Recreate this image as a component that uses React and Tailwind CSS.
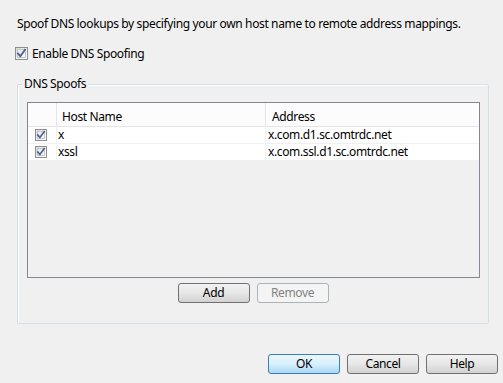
import React from "react";

function Check({ size = 13 }) {
  return (
    <span
      className="relative inline-flex shrink-0 items-center justify-center border border-[#8f8f8f] bg-gradient-to-br from-[#dcdcdc] to-[#ffffff]"
      style={{ width: size, height: size }}
    >
      <span className="absolute inset-[1px] border border-[#c4c8cc] bg-gradient-to-br from-[#e6e8ea] to-[#fbfbfb]" />
      <svg viewBox="0 0 11 11" className="relative" style={{ width: size - 2, height: size - 2 }}>
        <path d="M2 5.5 L4.3 8.2 L9 1.8" fill="none" stroke="#4a5f97" strokeWidth="1.8" strokeLinecap="square" />
      </svg>
    </span>
  );
}

function Btn({ children, kind = "normal" }) {
  const base =
    "flex h-[20px] w-[72px] items-center justify-center rounded-[3px] border text-[12px] leading-none";
  if (kind === "default")
    return (
      <div className={base + " border-[#3c7fb1] bg-gradient-to-b from-[#eaf6fd] via-[#d9f0fc] to-[#a7d9f5] text-black"}>
        {children}
      </div>
    );
  if (kind === "disabled")
    return (
      <div className={base + " border-[#adb2b5] bg-[#f4f4f4] text-[#838383]"}>{children}</div>
    );
  return (
    <div className={base + " border-[#707070] bg-gradient-to-b from-[#f2f2f2] via-[#e6e6e6] to-[#d2d2d2] text-black"}>
      {children}
    </div>
  );
}

const rows = [
  { host: "x", addr: "x.com.d1.sc.omtrdc.net" },
  { host: "xssl", addr: "x.com.ssl.d1.sc.omtrdc.net" },
];

export default function App() {
  return (
    <div
      className="flex h-[383px] w-[503px] flex-col bg-[#f0f0f0] text-[12px] leading-[16px] tracking-[-0.37px] text-black"
      style={{ fontFamily: '"Noto Sans", sans-serif' }}
    >
      <div className="pl-[17px] pt-[16px]">
        Spoof DNS lookups by specifying your own host name to remote address mappings.
      </div>
      <div className="ml-[15px] mt-[15px] flex h-[13px] items-center gap-[4px]">
        <Check />
        <span>Enable DNS Spoofing</span>
      </div>
      <div className="relative ml-[17px] mt-[24px] flex h-[240px] w-[472px] flex-col rounded-[2px] border border-[#d5dfe5] pb-[20px] pl-[9px] pr-[8px] pt-[17px] shadow-[inset_1px_1px_0_#ffffff]">
        <span className="absolute left-[4px] top-[-9px] bg-[#f0f0f0] px-[2px]">DNS Spoofs</span>
        <div className="flex h-[176px] w-[453px] flex-col border border-[#828790] bg-[#f0f0f0]">
          <div className="flex h-[24px] border-b border-[#e5e5e5] bg-[#fcfcfc]">
            <div className="w-[29px] border-r border-[#e5e5e5]" />
            <div className="w-[209px] border-r border-[#e5e5e5] pl-[5px] pt-[6px]">Host Name</div>
            <div className="flex-1 pl-[6px] pt-[6px]">Address</div>
          </div>
          {rows.map((r) => (
            <div key={r.host} className="flex h-[17px] border-b border-[#f0f0f0] bg-white">
              <div className="flex w-[29px] items-center border-r border-[#f0f0f0] pl-[7px]">
                <Check size={12} />
              </div>
              <div className="flex w-[209px] items-center border-r border-[#f0f0f0] pl-[1px]">{r.host}</div>
              <div className="flex flex-1 items-center pl-[2px]">{r.addr}</div>
            </div>
          ))}
        </div>
        <div className="mt-[5px] flex justify-center gap-[7px] pr-[1px]">
          <Btn>Add</Btn>
          <Btn kind="disabled">Remove</Btn>
        </div>
      </div>
      <div className="mt-[30px] flex justify-end gap-[7px] pr-[5px]">
        <Btn kind="default">OK</Btn>
        <Btn>Cancel</Btn>
        <Btn>Help</Btn>
      </div>
    </div>
  );
}
